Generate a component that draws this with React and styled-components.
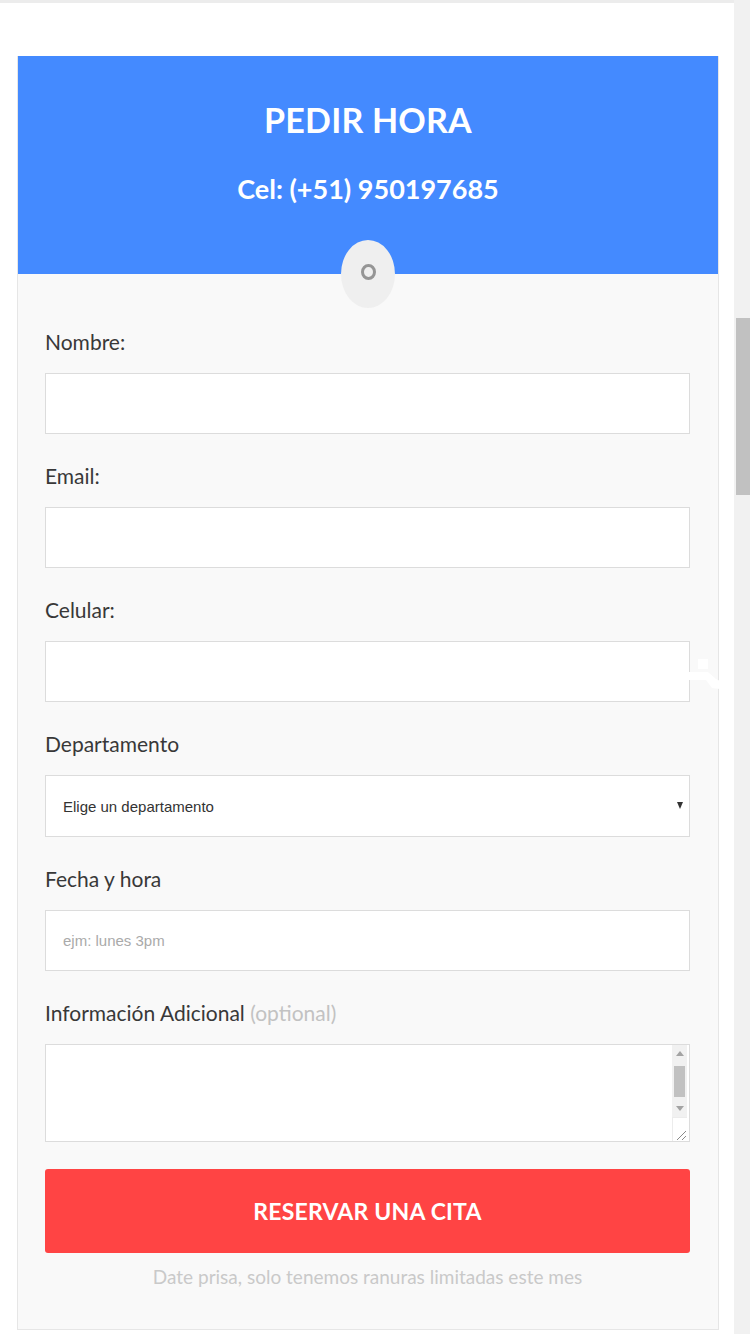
import React from "react";
import styled, { createGlobalStyle } from "styled-components";

const Global = createGlobalStyle`
  html, body { margin: 0; padding: 0; background: #fff; overflow: hidden; }
  * { box-sizing: border-box; }
`;

const Page = styled.div`
  position: relative;
  display: flex;
  width: 750px;
  height: 1334px;
  font-family: Lato, "Noto Sans", sans-serif;
`;

const Main = styled.div`
  flex: 1;
  border-top: 3px solid #ececec;
  padding: 53px 15px 0 17px;
`;

const Gutter = styled.div`
  width: 16px;
  background: #f1f1f1;
  padding: 318px 0 0 2px;
`;

const Thumb = styled.div`
  height: 177px;
  background: #c1c1c1;
`;

const Card = styled.section`
  border: 1px solid #e6e6e6;
  border-top: none;
  background: #f9f9f9;
`;

const Header = styled.header`
  position: relative;
  height: 218px;
  background: #448aff;
  color: #fff;
  text-align: center;
  padding-top: 44px;
`;

const Title = styled.h1`
  margin: 0;
  font-size: 34px;
  line-height: 40px;
  font-weight: 700;
  letter-spacing: 0.2px;
`;

const Phone = styled.h2`
  margin: 32px 0 0;
  font-size: 27px;
  line-height: 34px;
  font-weight: 700;
`;

const Badge = styled.div`
  position: absolute;
  left: 50%;
  bottom: -34px;
  width: 54px;
  height: 68px;
  margin-left: -27px;
  border-radius: 50%;
  background: #efefef;
  display: flex;
  align-items: center;
  justify-content: center;
`;

const Ring = styled.span`
  display: block;
  width: 15px;
  height: 16px;
  margin-top: -5px;
  border: 3px solid #959595;
  border-radius: 50%;
`;

const Form = styled.form`
  display: flex;
  flex-direction: column;
  padding: 53px 28px 39px 27px;
`;

const Field = styled.div`
  display: flex;
  flex-direction: column;
  margin-bottom: 27px;
`;

const Label = styled.label`
  font-size: 21px;
  line-height: 30px;
  color: #383838;
  margin-bottom: 16px;
`;

const Optional = styled.span`
  color: #c2c2c2;
`;

const Input = styled.input`
  height: 61px;
  border: 1px solid #dcdcdc;
  background: #fff;
  padding: 0 17px;
  font-family: "Liberation Sans", Arial, sans-serif;
  font-size: 15px;
  color: #333;
  outline: none;
  &::placeholder { color: #aaaaaa; }
`;

const SelectWrap = styled.div`
  position: relative;
`;

const Select = styled.select`
  width: 100%;
  height: 62px;
  border: 1px solid #dcdcdc;
  border-radius: 0;
  background: #fff;
  padding: 0 17px;
  font-family: "Liberation Sans", Arial, sans-serif;
  font-size: 15px;
  color: #333;
  appearance: none;
  outline: none;
`;

const Caret = styled.span`
  position: absolute;
  right: 7px;
  top: 27px;
  width: 0;
  height: 0;
  border-left: 3.5px solid transparent;
  border-right: 3.5px solid transparent;
  border-top: 7px solid #333;
  pointer-events: none;
`;

const TextBox = styled.div`
  display: flex;
  height: 98px;
  border: 1px solid #dcdcdc;
  background: #fff;
`;

const TextArea = styled.textarea`
  flex: 1;
  border: none;
  background: transparent;
  resize: none;
  outline: none;
  padding: 4px;
  font-family: "Liberation Sans", Arial, sans-serif;
  font-size: 15px;
  color: #333;
`;

const Rail = styled.div`
  display: flex;
  flex-direction: column;
  width: 15px;
  margin-right: 2px;
`;

const ArrowBtn = styled.div`
  height: 17px;
  background: #f1f1f1;
  display: flex;
  align-items: center;
  justify-content: center;
`;

const Track = styled.div`
  height: 38px;
  background: #f1f1f1;
  padding: 4px 2px 0;
`;

const RailThumb = styled.div`
  height: 31px;
  background: #c1c1c1;
`;

const Resizer = styled.div`
  flex: 1;
  background: #fff;
  border-top: 1px solid #ececec;
  border-left: 1px solid #ececec;
  display: flex;
  align-items: flex-end;
  justify-content: flex-end;
`;

const Button = styled.button`
  height: 84px;
  border: none;
  border-radius: 3px;
  background: #ff4444;
  color: #fff;
  font-family: Lato, "Noto Sans", sans-serif;
  font-size: 23px;
  font-weight: 700;
  letter-spacing: 0.2px;
  cursor: pointer;
`;

const Note = styled.p`
  margin: 11px 0 0;
  text-align: center;
  font-size: 19px;
  line-height: 26px;
  color: #c9c9c9;
`;

const Artifact = styled.svg`
  position: absolute;
  left: 686px;
  top: 655px;
`;

export default function App() {
  return (
    <Page>
      <Global />
      <Main>
        <Card>
          <Header>
            <Title>PEDIR HORA</Title>
            <Phone>Cel: (+51) 950197685</Phone>
            <Badge>
              <Ring />
            </Badge>
          </Header>
          <Form onSubmit={(e) => e.preventDefault()}>
            <Field>
              <Label>Nombre:</Label>
              <Input type="text" />
            </Field>
            <Field>
              <Label>Email:</Label>
              <Input type="email" />
            </Field>
            <Field>
              <Label>Celular:</Label>
              <Input type="tel" />
            </Field>
            <Field>
              <Label>Departamento</Label>
              <SelectWrap>
                <Select defaultValue="">
                  <option value="">Elige un departamento</option>
                </Select>
                <Caret />
              </SelectWrap>
            </Field>
            <Field>
              <Label>Fecha y hora</Label>
              <Input type="text" placeholder="ejm: lunes 3pm" />
            </Field>
            <Field>
              <Label>
                Información Adicional <Optional>(optional)</Optional>
              </Label>
              <TextBox>
                <TextArea />
                <Rail>
                  <ArrowBtn>
                    <svg width="8" height="5" viewBox="0 0 8 5">
                      <polygon points="0,5 8,5 4,0" fill="#a3a3a3" />
                    </svg>
                  </ArrowBtn>
                  <Track>
                    <RailThumb />
                  </Track>
                  <ArrowBtn>
                    <svg width="8" height="5" viewBox="0 0 8 5">
                      <polygon points="0,0 8,0 4,5" fill="#a3a3a3" />
                    </svg>
                  </ArrowBtn>
                  <Resizer>
                    <svg width="12" height="12" viewBox="0 0 12 12">
                      <line x1="2" y1="11" x2="11" y2="2" stroke="#8a8a8a" strokeWidth="1" />
                      <line x1="7" y1="11" x2="11" y2="7" stroke="#8a8a8a" strokeWidth="1" />
                    </svg>
                  </Resizer>
                </Rail>
              </TextBox>
            </Field>
            <Button type="submit">RESERVAR UNA CITA</Button>
            <Note>Date prisa, solo tenemos ranuras limitadas este mes</Note>
          </Form>
        </Card>
      </Main>
      <Gutter>
        <Thumb />
      </Gutter>
      <Artifact width="36" height="38" viewBox="0 0 36 38">
        <rect x="12" y="4" width="10" height="10" fill="#fff" />
        <polygon points="2,17 22,17 30,24 34,26 34,34 26,33 20,25 2,25" fill="#fff" />
      </Artifact>
    </Page>
  );
}
